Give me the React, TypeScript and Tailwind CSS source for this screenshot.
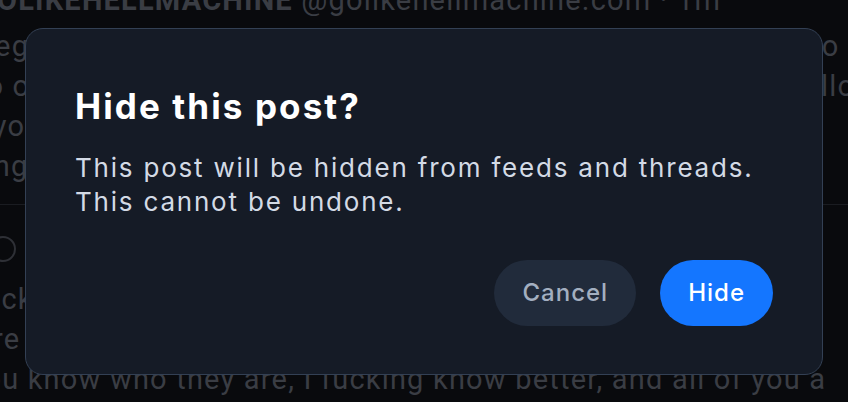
import React from 'react';

const feedLine = "whitespace-nowrap h-[40px] leading-[40px]";

const BackgroundFeed: React.FC = () => (
  <div
    className="flex flex-col -ml-[24px] -mt-[20px] text-[29px] tracking-[1.2px] text-[#3a3d44]"
    style={{ fontFamily: 'Roboto, "Liberation Sans", sans-serif' }}
  >
    <div className={feedLine}>
      <span className="font-bold">GOLIKEHELLMACHINE</span>{' '}
      <span>@golikehellmachine.com · 1m</span>
    </div>
    <div className="pt-[6px]">
      <div className={feedLine}>Regiving the post that everyone keeps sharing, and I would co</div>
      <div className={feedLine}>to or at least someone who keeps on posting it, please do follo</div>
      <div className={feedLine}>&nbsp;&nbsp;you all know what this is about and why it matters, we are</div>
      <div className={feedLine}>ong time ago and nobody listened then either</div>
    </div>
    <div className="mt-[18px] border-t border-[#1a1c21]" />
    <div className="flex items-center gap-3 pt-[22px] pl-[14px]">
      <div className="w-[26px] h-[26px] rounded-full border-2 border-[#2e3036] shrink-0" />
      <span className="font-bold whitespace-nowrap">Cold Open @coldopen.bsky.social</span>
    </div>
    <div className="pt-[8px]">
      <div className={feedLine}>luck this, all of them, every last one of the people who wo</div>
      <div className={feedLine}>are still pretending that this is fine and normal, but</div>
      <div className={feedLine}>&nbsp;ou know who they are, I fucking know better, and all of you a</div>
      <div className={feedLine}>and nobody is coming to save us from what is happening here</div>
    </div>
  </div>
);

export default function App() {
  return (
    <div
      className="relative w-[848px] h-[402px] overflow-hidden bg-[#090a0d]"
      style={{ fontFamily: 'Inter, "Noto Sans", sans-serif' }}
    >
      <BackgroundFeed />

      <div className="absolute left-[25px] top-[28px] w-[798px] h-[347px] flex flex-col rounded-[18px] border border-[#334054] bg-[#151b26] px-[49px] pt-[57px] pb-[48px]">
        <h2 className="text-[35px] leading-[40px] tracking-[2.1px] font-bold text-white">Hide this post?</h2>
        <p className="mt-[25px] text-[26px] leading-[34px] tracking-[1.8px] text-[#d3dae5]">
          This post will be hidden from feeds and threads.
          <br />
          This cannot be undone.
        </p>
        <div className="mt-auto flex justify-end gap-6">
          <button className="h-[66px] px-[28px] rounded-full bg-[#212b3b] text-[24px] tracking-[1px] font-medium text-[#a3afc0]">
            Cancel
          </button>
          <button className="h-[66px] px-[28px] rounded-full bg-[#1476ff] text-[24px] tracking-[1px] font-medium text-white">
            Hide
          </button>
        </div>
      </div>
    </div>
  );
}
